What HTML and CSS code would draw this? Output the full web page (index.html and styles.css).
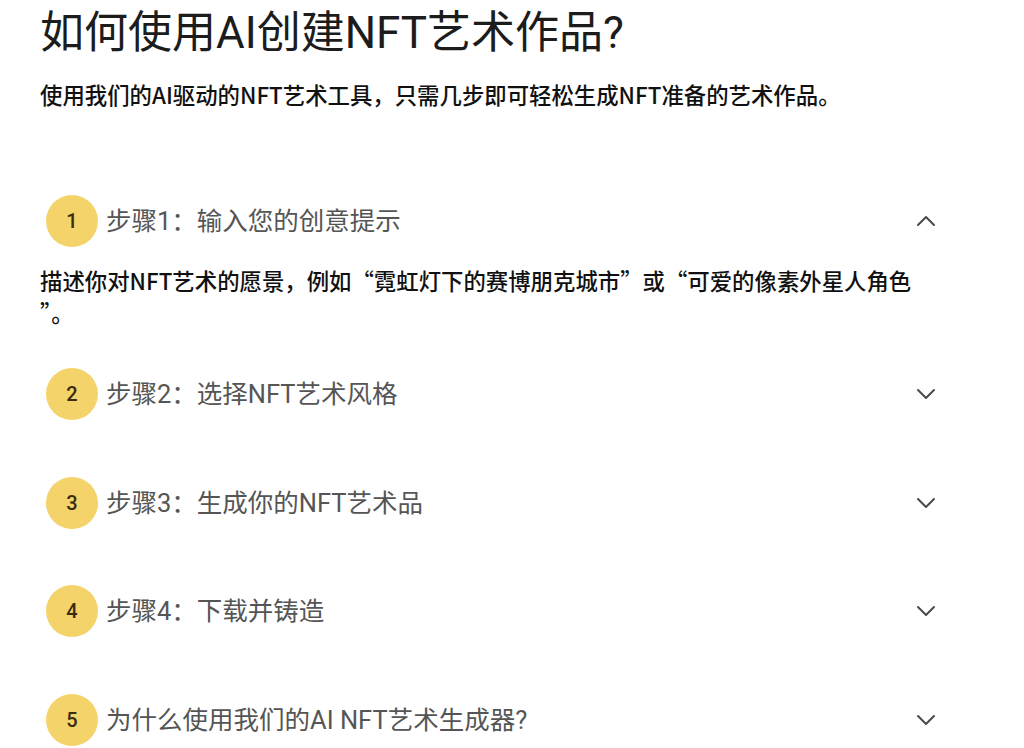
FILE: index.html
```html
<!DOCTYPE html>
<html lang="zh-CN">
<head>
<meta charset="utf-8">
<title>如何使用AI创建NFT艺术作品?</title>
<link rel="stylesheet" href="styles.css">
</head>
<body>
<main class="page">
  <h1 class="title">如何使用AI创建NFT艺术作品?</h1>
  <p class="subtitle">使用我们的AI驱动的NFT艺术工具，只需几步即可轻松生成NFT准备的艺术作品。</p>

  <section class="steps">
    <div class="step step--open">
      <div class="step-head">
        <span class="badge">1</span>
        <span class="step-title">步骤1：输入您的创意提示</span>
        <svg class="chev" viewBox="0 0 20 12" width="20" height="12"><path d="M2 10 L10 2 L18 10"/></svg>
      </div>
      <p class="step-body">描述你对NFT艺术的愿景，例如“霓虹灯下的赛博朋克城市”或“可爱的像素外星人角色”。</p>
    </div>
    <div class="step">
      <div class="step-head">
        <span class="badge">2</span>
        <span class="step-title">步骤2：选择NFT艺术风格</span>
        <svg class="chev" viewBox="0 0 20 12" width="20" height="12"><path d="M2 2 L10 10 L18 2"/></svg>
      </div>
    </div>
    <div class="step">
      <div class="step-head">
        <span class="badge">3</span>
        <span class="step-title">步骤3：生成你的NFT艺术品</span>
        <svg class="chev" viewBox="0 0 20 12" width="20" height="12"><path d="M2 2 L10 10 L18 2"/></svg>
      </div>
    </div>
    <div class="step">
      <div class="step-head">
        <span class="badge">4</span>
        <span class="step-title">步骤4：下载并铸造</span>
        <svg class="chev" viewBox="0 0 20 12" width="20" height="12"><path d="M2 2 L10 10 L18 2"/></svg>
      </div>
    </div>
    <div class="step">
      <div class="step-head">
        <span class="badge">5</span>
        <span class="step-title">为什么使用我们的AI NFT艺术生成器?</span>
        <svg class="chev" viewBox="0 0 20 12" width="20" height="12"><path d="M2 2 L10 10 L18 2"/></svg>
      </div>
    </div>
  </section>
</main>
</body>
</html>
```

FILE: styles.css
```css
html, body {
  margin: 0;
  padding: 0;
  background: #ffffff;
}

body {
  font-family: Roboto, "Noto Sans CJK SC", sans-serif;
  color: #1a1a1a;
}

.page {
  padding: 7px 0 0 40px;
  width: 898px;
}

.title {
  margin: 0;
  font-size: 44px;
  font-weight: 400;
  line-height: 53px;
  color: #1c1c1c;
}

.subtitle {
  margin: 18px 0 0;
  font-family: "Noto Sans CJK SC", sans-serif;
  font-size: 22.4px;
  font-weight: 500;
  line-height: 32px;
  color: #111111;
}

.steps {
  margin-top: 57px;
  display: flex;
  flex-direction: column;
}

.step {
  padding: 24px 0 24.7px;
}

.step--open {
  padding-bottom: 12px;
}

.step-head {
  display: flex;
  align-items: center;
  height: 60px;
}

.badge {
  flex: none;
  width: 52px;
  height: 52px;
  margin-left: 6px;
  border-radius: 50%;
  background: #f4d36a;
  color: #3a2c12;
  font-size: 20px;
  font-weight: 500;
  display: flex;
  align-items: center;
  justify-content: center;
}

.step-title {
  flex: 1;
  margin-left: 8px;
  font-size: 25.5px;
  font-weight: 400;
  color: #555555;
  line-height: 32px;
}

.chev {
  flex: none;
  margin-right: 2px;
  fill: none;
  stroke: #4a4a4a;
  stroke-width: 2;
  stroke-linecap: round;
  stroke-linejoin: round;
}

.step-body {
  margin: 0;
  padding: 13px 18px 0 0;
  font-family: "Noto Sans CJK SC", sans-serif;
  font-size: 22.4px;
  font-weight: 500;
  line-height: 32px;
  color: #111111;
  line-break: anywhere;
}
```
